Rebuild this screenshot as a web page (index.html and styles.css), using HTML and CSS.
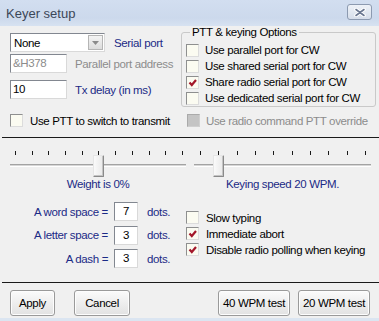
FILE: index.html
```html
<!DOCTYPE html>
<html>
<head>
<meta charset="utf-8">
<link rel="stylesheet" href="styles.css">
</head>
<body>
<div class="win">
  <div class="titlebar">
    <span class="title">Keyer setup</span>
    <span class="close">
      <svg width="12" height="9" viewBox="0 0 12 9"><path d="M2 1.5 L10 7.5 M10 1.5 L2 7.5" stroke="#fff" stroke-width="3.6" stroke-linecap="round"/><path d="M2 1.5 L10 7.5 M10 1.5 L2 7.5" stroke="#6b7891" stroke-width="1.6" stroke-linecap="round"/></svg>
    </span>
  </div>
  <div class="client">
    <div class="top">
      <div class="left">
        <div class="row r1">
          <div class="combo"><span class="val">None</span><span class="drop"><svg width="7" height="4" viewBox="0 0 7 4"><path d="M0 0 L7 0 L3.5 4 Z" fill="#8a8a8a"/></svg></span></div>
          <span class="lbl blue">Serial port</span>
        </div>
        <div class="row r2">
          <div class="tb gray">&amp;H378</div>
          <span class="lbl gray">Parallel port address</span>
        </div>
        <div class="row r3">
          <div class="tb">10</div>
          <span class="lbl blue">Tx delay (in ms)</span>
        </div>
      </div>
      <fieldset class="group">
        <legend>PTT &amp; keying Options</legend>
        <div class="chk"><span class="box"></span><span>Use parallel port for CW</span></div>
        <div class="chk"><span class="box"></span><span>Use shared serial port for CW</span></div>
        <div class="chk"><span class="box on"><svg width="11" height="11" viewBox="0 0 11 11"><path d="M2.5 5.5 L4.8 8 L9 3" fill="none" stroke="#a3172a" stroke-width="2.2"/></svg></span><span>Share radio serial port for CW</span></div>
        <div class="chk"><span class="box"></span><span>Use dedicated serial port for CW</span></div>
      </fieldset>
    </div>
    <div class="checkrow">
      <div class="chk ptt"><span class="box"></span><span>Use PTT to switch to transmit</span></div>
      <div class="chk dis"><span class="box"></span><span>Use radio command PTT override</span></div>
    </div>
    <div class="sep"></div>
    <div class="sliders">
      <div class="sl sl-left">
        <div class="slider">
          <div class="ticks"><i></i><i></i><i></i><i></i><i></i><i></i><i></i><i></i><i></i><i></i><i></i></div>
          <div class="track"></div>
          <div class="thumb" style="left: 83px"></div>
        </div>
        <div class="sl-label">Weight is 0%</div>
      </div>
      <div class="sl sl-right">
        <div class="slider">
          <div class="ticks"><i></i><i></i><i></i><i></i><i></i><i></i><i></i><i></i><i></i><i></i></div>
          <div class="track"></div>
          <div class="thumb" style="left: 19px"></div>
        </div>
        <div class="sl-label">Keying speed 20 WPM.</div>
      </div>
    </div>
    <div class="lower">
      <div class="spaces">
        <span class="sp-l">A word space =</span><span class="num">7</span><span class="dots">dots.</span>
        <span class="sp-l">A letter space =</span><span class="num">3</span><span class="dots">dots.</span>
        <span class="sp-l">A dash =</span><span class="num">3</span><span class="dots">dots.</span>
      </div>
      <div class="opts">
        <div class="chk"><span class="box"></span><span>Slow typing</span></div>
        <div class="chk"><span class="box on"><svg width="11" height="11" viewBox="0 0 11 11"><path d="M2.5 5.5 L4.8 8 L9 3" fill="none" stroke="#a3172a" stroke-width="2.2"/></svg></span><span>Immediate abort</span></div>
        <div class="chk"><span class="box on"><svg width="11" height="11" viewBox="0 0 11 11"><path d="M2.5 5.5 L4.8 8 L9 3" fill="none" stroke="#a3172a" stroke-width="2.2"/></svg></span><span>Disable radio polling when keying</span></div>
      </div>
    </div>
    <div class="sep sep2"></div>
    <div class="buttons">
      <button class="btn b-apply">Apply</button>
      <button class="btn b-cancel">Cancel</button>
      <span class="grow"></span>
      <button class="btn b-test">40 WPM test</button>
      <button class="btn b-test">20 WPM test</button>
    </div>
  </div>
</div>
</body>
</html>
```

FILE: styles.css
```css
* { box-sizing: border-box; }
html, body { margin: 0; padding: 0; }
body {
  width: 379px;
  height: 321px;
  overflow: hidden;
  background: #f0f0f0;
  font-family: "Liberation Sans", Arial, sans-serif;
  font-size: 11.5px;
  letter-spacing: -0.35px;
  color: #000;
}
.win { width: 379px; height: 321px; display: flex; flex-direction: column; }

.titlebar {
  height: 26px;
  flex: none;
  display: flex;
  align-items: center;
  justify-content: space-between;
  padding: 0 7px 0 6px;
  background: linear-gradient(#d2def0, #ccd9ec 70%, #d7e2f1);
}
.title { font-size: 13px; letter-spacing: 0; color: #3b4758; padding-top: 1px; }
.close {
  width: 25px;
  height: 16px;
  margin-bottom: 2px;
  border: 1px solid #8c9ab0;
  border-radius: 3px;
  background: linear-gradient(#eef2f8, #d6deea);
  display: flex;
  align-items: center;
  justify-content: center;
}

.client {
  flex: 1;
  display: flex;
  flex-direction: column;
  background: #f0f0f0;
  border-bottom: 3px solid #dbe5f1;
}

.blue { color: #1b2a86; }
.gray { color: #8c8c8c; }

.top { display: flex; align-items: flex-start; }
.left { width: 181px; padding-left: 10px; }
.row { display: flex; align-items: center; }
.r1 { margin-top: 7px; }
.r2 { margin-top: 2px; }
.r3 { margin-top: 7px; }
.lbl { white-space: nowrap; }
.r1 .lbl { margin-left: 9px; }
.r2 .lbl, .r3 .lbl { margin-left: 8px; }

.combo, .tb, .num {
  height: 19px;
  background: #fff;
  border: 1px solid;
  border-color: #828790 #d9d9d9 #d9d9d9 #828790;
}
.combo { width: 95px; display: flex; align-items: center; padding: 0 1px 0 3px; }
.combo .val { flex: 1; }
.drop {
  width: 15px;
  height: 15px;
  border: 1px solid #b5b5b5;
  background: linear-gradient(#f4f4f4, #dcdcdc);
  display: flex;
  align-items: center;
  justify-content: center;
}
.tb { width: 57px; padding-left: 2px; line-height: 17px; }

.group {
  width: 195px;
  height: 81px;
  margin: 0;
  padding: 4px 0 0 4px;
  border: 1px solid #c9c9c9;
  border-radius: 3px;
  min-width: 0;
}
.group legend {
  padding: 0 2px;
  margin-left: 4px;
  line-height: 12px;
  color: #000;
}
.group .chk { height: 16px; }

.chk { display: flex; align-items: center; white-space: nowrap; }
.box {
  width: 13px;
  height: 13px;
  flex: none;
  margin-right: 6px;
  background: #fbfbf1;
  border: 1px solid;
  border-color: #8e8f8f #dcdcdc #dcdcdc #8e8f8f;
  display: flex;
  align-items: center;
  justify-content: center;
}

.checkrow { display: flex; margin-top: 7px; height: 13px; }
.ptt { width: 187px; padding-left: 10px; }
.ptt .box { margin-right: 7px; }
.dis { color: #8c8c8c; }
.dis .box { background: #c4c4c4; border-color: #aaaaaa #cfcfcf #cfcfcf #aaaaaa; }

.sep { height: 1px; background: #1a1a1a; margin: 10px 0 0 2px; flex: none; }

.sliders { display: flex; padding-left: 10px; gap: 8px; margin-top: 13px; }
.sl { display: flex; flex-direction: column; }
.sl-left { width: 176px; }
.sl-right { width: 177px; }
.slider { position: relative; height: 16px; }
.ticks { display: flex; justify-content: space-between; height: 4px; }
.sl-left .ticks { margin: 0 3px 0 5px; }
.sl-right .ticks { margin: 0 5px 0 6px; }
.ticks i { width: 1px; height: 4px; background: #1a1a1a; }
.track {
  margin-top: 9px;
  height: 3px;
  border-top: 1px solid #a3a3a3;
  border-bottom: 1px solid #ffffff;
  background: #d6d6d6;
}
.thumb {
  position: absolute;
  top: 4px;
  width: 11px;
  height: 22px;
  background: linear-gradient(90deg, #fafafa, #e9e9e9);
  border: 1px solid;
  border-color: #e6e6e6 #8a8a8a #8a8a8a #e6e6e6;
  border-radius: 1px;
  box-shadow: inset -1px -1px 0 #c4c4c4;
}
.sl-label { margin-top: 10px; line-height: 15px; text-align: center; color: #1b2a86; }

.lower { display: flex; margin-top: 10px; }
.spaces {
  width: 186px;
  display: grid;
  grid-template-columns: 108px 30px auto;
  row-gap: 4.5px;
  align-items: center;
}
.sp-l { text-align: right; color: #1b2a86; white-space: nowrap; }
.num { margin-left: 6px; width: 24px; text-align: center; line-height: 17px; }
.dots { padding-left: 9px; color: #1b2a86; }
.opts { padding-top: 9px; display: flex; flex-direction: column; gap: 3px; }
.opts .chk { height: 13px; }
.opts .box { margin-right: 7px; }

.sep2 { margin-top: 14px; }

.buttons { display: flex; padding: 7px 9px 0 10px; align-items: flex-start; }
.btn {
  height: 26px;
  padding: 0;
  font-family: inherit;
  font-size: 11.5px;
  letter-spacing: -0.35px;
  white-space: nowrap;
  color: #000;
  border: 1px solid #9a9a9a;
  border-radius: 3px;
  background: linear-gradient(#fbfbfb, #eeeeee 50%, #e2e2e2);
  box-shadow: inset 0 0 0 1px #fdfdfd;
}
.b-apply { width: 45px; }
.b-cancel { width: 56px; margin-left: 19px; }
.grow { flex: 1; }
.b-test { width: 72px; margin-left: 8px; }
```
